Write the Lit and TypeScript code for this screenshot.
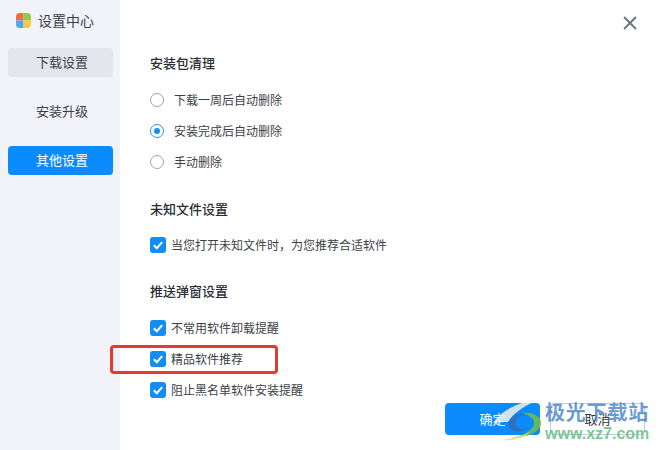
import { LitElement, html, css, svg } from 'lit';
import { customElement } from 'lit/decorators.js';

const navItems = [
  { label: '下载设置', cls: 'soft' },
  { label: '安装升级', cls: '' },
  { label: '其他设置', cls: 'active' },
];

const radios = [
  { label: '下载一周后自动删除', on: false },
  { label: '安装完成后自动删除', on: true },
  { label: '手动删除', on: false },
];

const pushChecks = ['不常用软件卸载提醒', '精品软件推荐', '阻止黑名单软件安装提醒'];

@customElement('app-root')
export class AppRoot extends LitElement {
  static styles = css`
    :host {
      display: block;
      width: 660px;
      height: 450px;
      overflow: hidden;
      font-family: 'Noto Sans CJK SC', sans-serif;
      color: #3c3f46;
    }
    .window {
      position: relative;
      display: flex;
      height: 450px;
      background: #fff;
    }
    .side {
      width: 120px;
      flex: none;
      box-sizing: border-box;
      padding: 11px 7px 0 8px;
      background: #f1f3f9;
    }
    .brand {
      display: flex;
      align-items: center;
      gap: 7px;
      height: 18px;
      padding-left: 8px;
      font-size: 14px;
      line-height: 18px;
    }
    .nav {
      display: flex;
      flex-direction: column;
      gap: 20px;
      margin-top: 19px;
    }
    .nav div {
      height: 29px;
      padding-left: 3px;
      border-radius: 4px;
      font-size: 13px;
      line-height: 27px;
      text-align: center;
    }
    .nav .soft { background: #e3e6ec; }
    .nav .active { background: #0a8cff; color: #fff; }
    .main {
      flex: 1;
      padding: 53px 15px 0 30px;
    }
    h3 {
      margin: 0;
      font-size: 13px;
      font-weight: 500;
      line-height: 20px;
      color: #2b2e35;
    }
    .rows { display: flex; flex-direction: column; gap: 11px; }
    .row {
      display: flex;
      align-items: center;
      height: 20px;
      font-size: 12px;
      line-height: 20px;
    }
    .radio {
      box-sizing: border-box;
      width: 14px;
      height: 14px;
      border-radius: 50%;
      border: 1px solid #a0a3a8;
      margin-right: 10px;
      flex: none;
    }
    .radio.on {
      border-color: #2a93ef;
      display: flex;
      align-items: center;
      justify-content: center;
    }
    .radio.on::after {
      content: '';
      width: 6px;
      height: 6px;
      border-radius: 50%;
      background: #1a8cf0;
    }
    .check {
      width: 16px;
      height: 16px;
      border-radius: 3px;
      background: #148cf5;
      margin-right: 5px;
      flex: none;
      display: block;
    }
    .sec1 { margin-top: 17px; }
    .sec2 { margin-top: 27px; }
    .sec2 .row { margin-top: 16px; }
    .sec3 { margin-top: 26px; }
    .sec3 .rows { margin-top: 17px; }
    .footer {
      position: absolute;
      left: 445px;
      top: 403px;
      display: flex;
    }
    .btn {
      box-sizing: border-box;
      height: 32px;
      font-size: 13px;
      line-height: 30px;
      text-align: center;
      border-radius: 4px;
    }
    .ok { width: 95px; background: #0a8cff; color: #fff; line-height: 32px; }
    .cancel {
      width: 95px;
      margin-left: 10px;
      border: 1px solid #c3cbd8;
      color: #33363d;
    }
    .close {
      position: absolute;
      top: 16px;
      right: 23px;
      width: 14px;
      height: 14px;
      display: block;
    }
    .highlight {
      position: absolute;
      left: 110px;
      top: 345px;
      width: 168px;
      height: 29px;
      box-sizing: border-box;
      border: 3px solid #e53a2e;
      border-radius: 4px;
    }
    .mark {
      position: absolute;
      left: 502px;
      top: 400px;
      width: 158px;
      height: 50px;
    }
    .mark svg {
      position: absolute;
      left: -10px;
      top: 0;
      overflow: visible;
      filter: blur(0.6px);
    }
    .mark-cn {
      position: absolute;
      left: 43px;
      top: -1px;
      font-size: 20px;
      line-height: 26px;
      font-weight: 700;
      color: rgba(66, 128, 198, 0.78);
      white-space: nowrap;
      letter-spacing: 0.8px;
    }
    .mark-url {
      position: absolute;
      left: 43px;
      top: 24px;
      font-family: 'Liberation Sans', sans-serif;
      font-size: 16px;
      line-height: 20px;
      font-weight: 700;
      color: rgba(90, 185, 125, 0.8);
      white-space: nowrap;
    }
  `;

  private checkbox() {
    return html`<svg class="check" viewBox="0 0 16 16">
      <path d="M3.8 8.2l3 3 5.4-6" fill="none" stroke="#fff" stroke-width="2" />
    </svg>`;
  }

  private logo() {
    return html`<svg width="15" height="15" viewBox="0 0 16 16" style="flex:none">
      <defs><clipPath id="c"><rect width="16" height="16" rx="4" /></clipPath></defs>
      <g clip-path="url(#c)">
        <rect width="8" height="8" fill="#ee6b45" />
        <rect x="8" width="8" height="8" fill="#95c84a" />
        <rect y="8" width="8" height="8" fill="#4aa8ee" />
        <rect x="8" y="8" width="8" height="8" fill="#f7c945" />
      </g>
    </svg>`;
  }

  private watermark() {
    // swirl of the download-site stamp, sits over the ok button
    return svg`<svg width="50" height="50" viewBox="-10 0 50 50" fill="none">
      <path d="M-9 23C0 10 16 2 36 0 24 5 12 12 6 22 2 22-4 22-9 23z" fill="#f2f1e4" opacity=".85" />
      <path d="M6 24C8 16 16 12 26 14 18 15 13 19 14 24 15 29 22 30 27 27 22 33 8 34 6 24z" fill="#2f6fb8" opacity=".9" />
      <path d="M20 13C30 12 40 16 39 24 38 32 24 38 10 38 22 35 32 30 32 23 32 18 27 15 20 13z" fill="#6fbb4a" opacity=".9" />
      <path d="M1 40C10 38 20 36 28 32 22 38 12 41 1 40z" fill="#e4e08a" opacity=".9" />
    </svg>`;
  }

  render() {
    return html`
      <div class="window">
        <aside class="side">
          <div class="brand">${this.logo()}<span>设置中心</span></div>
          <div class="nav">
            ${navItems.map((n) => html`<div class=${n.cls}>${n.label}</div>`)}
          </div>
        </aside>
        <main class="main">
          <h3>安装包清理</h3>
          <div class="rows sec1">
            ${radios.map(
              (r) => html`<div class="row"><span class="radio ${r.on ? 'on' : ''}"></span>${r.label}</div>`
            )}
          </div>
          <div class="sec2">
            <h3>未知文件设置</h3>
            <div class="row">${this.checkbox()}当您打开未知文件时，为您推荐合适软件</div>
          </div>
          <div class="sec3">
            <h3>推送弹窗设置</h3>
            <div class="rows">
              ${pushChecks.map((c) => html`<div class="row">${this.checkbox()}${c}</div>`)}
            </div>
          </div>
        </main>
        <svg class="close" viewBox="0 0 14 14">
          <path d="M1 1l12 12M13 1L1 13" stroke="#6b7080" stroke-width="1.8" fill="none" />
        </svg>
        <div class="footer">
          <div class="btn ok">确定</div>
          <div class="btn cancel">取消</div>
        </div>
        <div class="highlight"></div>
        <div class="mark">
          ${this.watermark()}
          <div class="mark-cn">极光下载站</div>
          <div class="mark-url">www.xz7.com</div>
        </div>
      </div>
    `;
  }
}
